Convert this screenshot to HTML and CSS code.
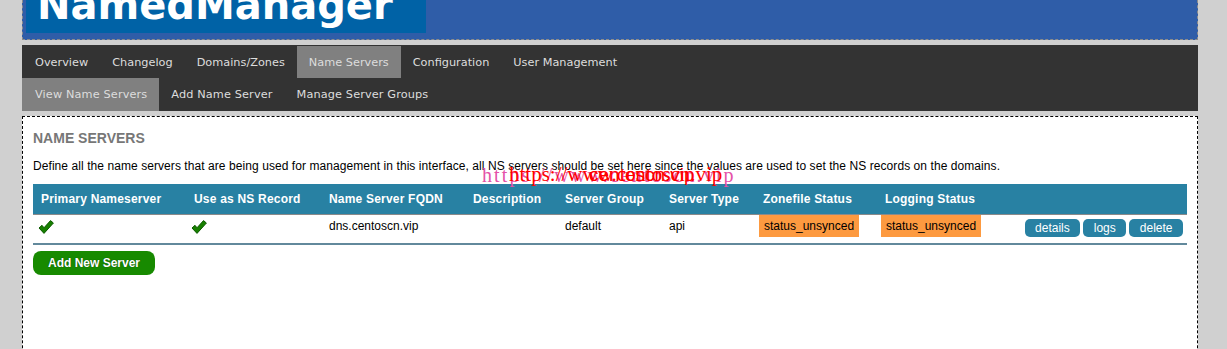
FILE: index.html
```html
<!DOCTYPE html>
<html lang="en">
<head>
    <meta charset="UTF-8">
    <title>NamedManager - Name Servers</title>
    <link rel="stylesheet" href="styles.css">
</head>
<body>
    <div class="page">
        <div class="header">
            <div class="logo"><h1>NamedManager</h1></div>
        </div>

        <div class="nav">
            <ul class="menu">
                <li>Overview</li>
                <li>Changelog</li>
                <li>Domains/Zones</li>
                <li class="active">Name Servers</li>
                <li>Configuration</li>
                <li>User Management</li>
            </ul>
            <ul class="menu sub">
                <li class="active">View Name Servers</li>
                <li>Add Name Server</li>
                <li>Manage Server Groups</li>
            </ul>
        </div>

        <div class="content">
            <!-- watermark overlay -->
            <div class="mark mark-pink">https://www.centoscn.vip</div>
            <div class="mark mark-red">https://www.centoscn.vip</div>
            <div class="mark mark-red2">centoscn.vip</div>

            <h2>NAME SERVERS</h2>
            <p class="intro">Define all the name servers that are being used for management in this interface, all NS servers should be set here since the values are used to set the NS records on the domains.</p>

            <table class="list">
                <colgroup>
                    <col style="width:153px">
                    <col style="width:135px">
                    <col style="width:144px">
                    <col style="width:92px">
                    <col style="width:104px">
                    <col style="width:94px">
                    <col style="width:122px">
                    <col style="width:122px">
                    <col style="width:188px">
                </colgroup>
                <tr>
                    <th>Primary Nameserver</th>
                    <th>Use as NS Record</th>
                    <th>Name Server FQDN</th>
                    <th>Description</th>
                    <th>Server Group</th>
                    <th>Server Type</th>
                    <th>Zonefile Status</th>
                    <th>Logging Status</th>
                    <th></th>
                </tr>
                <tr>
                    <td class="check-cell">
                        <svg class="check" width="16" height="14" viewBox="0 0 16 14">
                            <path d="M1 8 L4 5.3 L6 7.8 L12.5 0.6 L15.4 3 L6 13.4 Z" fill="#178000" stroke="#0c5a00" stroke-width="1" stroke-linejoin="round"/>
                        </svg>
                    </td>
                    <td class="check-cell">
                        <svg class="check" width="16" height="14" viewBox="0 0 16 14">
                            <path d="M1 8 L4 5.3 L6 7.8 L12.5 0.6 L15.4 3 L6 13.4 Z" fill="#178000" stroke="#0c5a00" stroke-width="1" stroke-linejoin="round"/>
                        </svg>
                    </td>
                    <td>dns.centoscn.vip</td>
                    <td></td>
                    <td>default</td>
                    <td>api</td>
                    <td class="status-cell"><span class="status">status_unsynced</span></td>
                    <td class="status-cell"><span class="status">status_unsynced</span></td>
                    <td class="actions">
                        <div class="btns">
                            <a class="btn">details</a>
                            <a class="btn">logs</a>
                            <a class="btn">delete</a>
                        </div>
                    </td>
                </tr>
            </table>

            <a class="add-btn">Add New Server</a>
        </div>
    </div>
</body>
</html>
```

FILE: styles.css
```css
*{
    margin: 0;
    padding: 0;
    list-style: none;
}
body{
    background: #d0d0d0;
    font-family: "Liberation Sans", Arial, sans-serif;
    font-size: 12px;
    color: #000;
}
.page{
    width: 1176px;
    margin-left: 22px;
}

/* header */
.header{
    height: 40px;
    background: #2f5da8;
    border: 1px dashed #8c8c8c;
    border-top: none;
    padding-left: 3px;
    box-sizing: border-box;
}
.logo{
    width: 400px;
    height: 33px;
    background: #0062a6;
    overflow: hidden;
}
.logo h1{
    margin-top: -18px;
    padding-left: 11px;
    font-family: "DejaVu Sans", sans-serif;
    font-weight: bold;
    font-size: 40px;
    line-height: 46px;
    color: #fff;
}

/* navigation */
.nav{
    margin-top: 5px;
    background: #333;
    padding: 1px 1px 0;
}
.menu{
    display: flex;
    font-family: "DejaVu Sans", sans-serif;
    font-size: 11.3px;
}
.menu li{
    padding: 1px 12px 0;
    line-height: 31px;
    color: #ddd;
}
.menu.sub li{
    line-height: 32px;
    letter-spacing: 0.12px;
}
.menu li.active{
    background: #808080;
}
.menu.sub li.active{
    margin-left: -1px;
    padding-left: 13px;
}

/* content */
.content{
    position: relative;
    margin-top: 5px;
    background: #fff;
    border: 1px dashed #000;
    padding: 10px;
    min-height: 300px;
}
.content h2{
    margin-top: 3px;
    font-size: 14px;
    line-height: 16px;
    color: #777;
}
.intro{
    margin-top: 13px;
    line-height: 14px;
    letter-spacing: 0.07px;
}

.list{
    margin-top: 11px;
    width: 1154px;
    table-layout: fixed;
    border-collapse: collapse;
}
.list th{
    height: 30px;
    padding: 0 8px;
    background: #2881a3;
    color: #fff;
    font-weight: bold;
    text-align: left;
    letter-spacing: 0.2px;
    border-bottom: 1px solid #8a8a8a;
    white-space: nowrap;
}
.list td{
    height: 29px;
    padding: 0 8px;
    line-height: 22px;
    vertical-align: top;
    border-bottom: 2px solid #62899c;
    box-sizing: border-box;
}
.list td.check-cell{
    padding-left: 5px;
}
.check{
    display: block;
    margin-top: 5px;
}
.list td.status-cell{
    padding-left: 4px;
}
.status{
    display: inline-block;
    padding: 0 5px;
    background: #fd9a40;
}
.list td.actions{
    padding: 4px 4px 0 0;
}
.btns{
    display: flex;
    justify-content: flex-end;
    gap: 3px;
}
.btn{
    display: block;
    height: 18px;
    line-height: 18px;
    padding: 0 10.5px;
    background: #2881a3;
    color: #fff;
    border-radius: 5px;
}

.add-btn{
    display: inline-block;
    margin-top: 6px;
    height: 24px;
    line-height: 24px;
    padding: 0 15px;
    background: #178a00;
    color: #fff;
    font-weight: bold;
    border-radius: 8px;
    text-shadow: 0 0 1px #0a3d00;
}

/* watermark over the page */
.mark{
    position: absolute;
    white-space: nowrap;
    font-family: "Liberation Serif", serif;
}
.mark-pink{
    left: 459px;
    top: 47px;
    font-size: 20px;
    line-height: 23px;
    letter-spacing: 2.1px;
    color: #e452a8;
}
.mark-red{
    left: 486px;
    top: 45px;
    font-size: 21px;
    line-height: 24px;
    color: #f00;
}
.mark-red2{
    left: 566px;
    top: 48px;
    font-family: "Liberation Sans", sans-serif;
    font-size: 19px;
    line-height: 20px;
    color: #f00;
}
```
